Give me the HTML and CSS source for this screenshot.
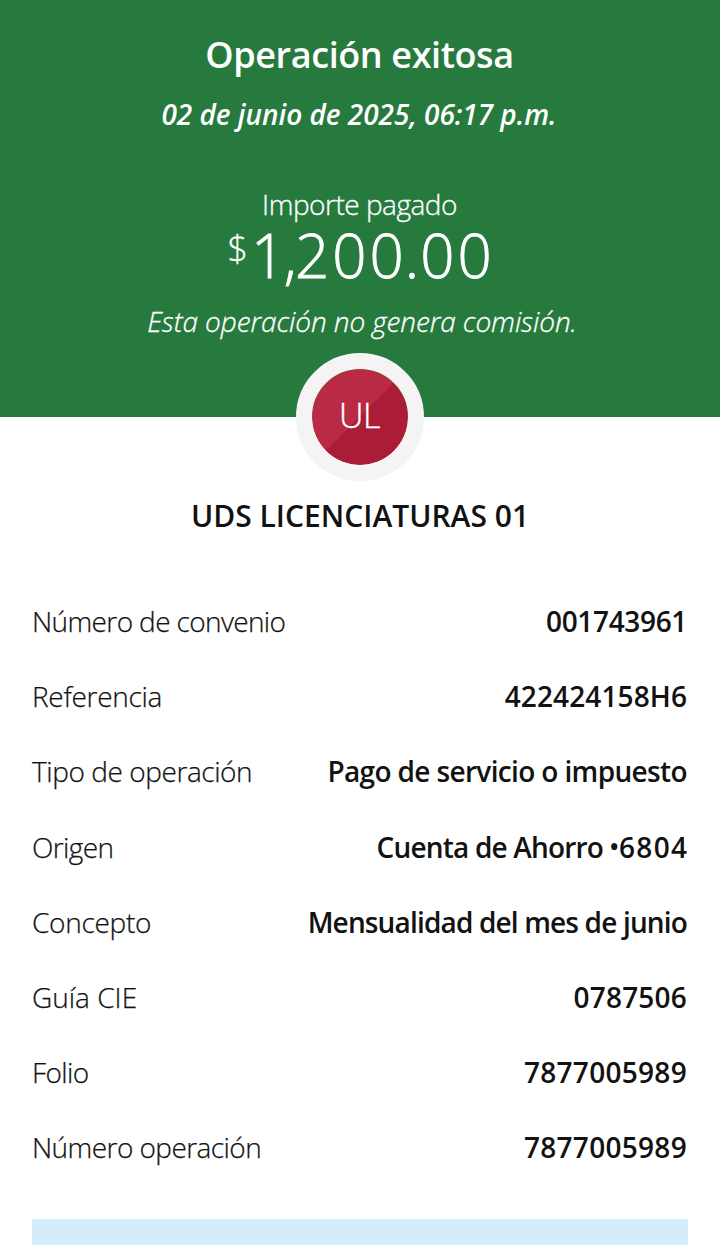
FILE: index.html
```html
<!DOCTYPE html>
<html lang="es">
<head>
<meta charset="utf-8">
<title>Operación exitosa</title>
<link rel="stylesheet" href="styles.css">
</head>
<body>
<main class="receipt">
  <header class="summary">
    <h1 class="title">Operación exitosa</h1>
    <p class="date">02 de junio de 2025, 06:17 p.m.</p>
    <p class="caption">Importe pagado</p>
    <p class="amount"><span class="currency">$</span><span class="figure"><span class="tight">1,</span><span class="wide">20</span>0.<span class="wide">0</span>0</span></p>
    <p class="fee">Esta operación no genera comisión.</p>
    <div class="avatar"><span>UL</span></div>
  </header>
  <h2 class="payee">UDS LICENCIATURAS 01</h2>
  <dl class="details">
    <div class="row"><dt class="l-convenio">Número de convenio</dt><dd class="v-convenio">001743961</dd></div>
    <div class="row"><dt class="l-referencia">Referencia</dt><dd class="v-referencia">422424158H6</dd></div>
    <div class="row"><dt class="l-tipo">Tipo de operación</dt><dd class="v-tipo">Pago de servicio o impuesto</dd></div>
    <div class="row"><dt class="l-origen">Origen</dt><dd class="v-origen">Cuenta de Ahorro <span class="dot">•</span><span class="digits">6804</span></dd></div>
    <div class="row"><dt class="l-concepto">Concepto</dt><dd class="v-concepto">Mensualidad del mes de junio</dd></div>
    <div class="row"><dt class="l-guia">Guía CIE</dt><dd class="v-guia">0787506</dd></div>
    <div class="row"><dt class="l-folio">Folio</dt><dd class="v-folio">7877005989</dd></div>
    <div class="row"><dt class="l-numero">Número operación</dt><dd class="v-folio">7877005989</dd></div>
  </dl>
  <div class="notice"></div>
</main>
</body>
</html>
```
FILE: styles.css
```css
* { box-sizing: border-box; margin: 0; padding: 0; }
body {
  height: 1245px;
  overflow: hidden;
  background: #fff;
  color: #121212;
  font-family: "Open Sans", "Noto Sans", sans-serif;
  white-space: nowrap;
}
.receipt { display: flex; flex-direction: column; height: 1245px; overflow: hidden; }
.summary {
  position: relative;
  flex: none;
  display: flex;
  flex-direction: column;
  align-items: center;
  height: 417px;
  padding-top: 31px;
  background: #277a3e;
  color: #fff;
}
.title { padding-right: 1px; font-size: 36px; font-weight: 600; line-height: 48px; letter-spacing: -0.4px; }
.date { margin-top: 16px; padding-right: 2px; font-size: 28px; font-weight: 600; font-style: italic; line-height: 38px; letter-spacing: -0.03px; }
.caption { margin-top: 52px; padding-right: 1px; font-size: 28px; font-weight: 300; line-height: 38px; letter-spacing: -0.5px; -webkit-text-stroke: 0.3px; }
.amount { display: flex; align-items: flex-start; height: 62px; font-weight: 300; }
.currency { margin: 8px 3px 0 0; font-size: 36px; line-height: 36px; -webkit-text-stroke: 0.3px; }
.figure { font-size: 60px; line-height: 64px; letter-spacing: 1px; -webkit-text-stroke: 0.8px; }
.tight { letter-spacing: -1.5px; }
.wide { letter-spacing: 3px; }
.fee { margin-top: 17px; padding-left: 4px; font-size: 28px; font-weight: 300; font-style: italic; line-height: 38px; letter-spacing: -0.1px; -webkit-text-stroke: 0.3px; }
/* Overlaps the boundary between the summary and the details */
.avatar {
  position: absolute;
  left: 296px;
  top: 353px;
  display: flex;
  align-items: center;
  justify-content: center;
  width: 128px;
  height: 128px;
  padding: 0 1px 4px 0;
  border: 16px solid #f4f4f4;
  border-radius: 50%;
  background: linear-gradient(135deg, #b92a45 50%, #ab1d37 50%);
  background-origin: padding-box;
  background-clip: padding-box;
  font-size: 34px;
  font-weight: 300;
  line-height: 40px;
  letter-spacing: -0.5px;
  -webkit-text-stroke: 0.4px;
}
.payee { flex: none; margin-top: 79px; text-align: center; font-size: 30px; font-weight: 600; line-height: 40px; letter-spacing: 0; }
.details { flex: none; margin-top: 48px; padding: 0 32px; font-size: 28px; line-height: 75.2px; }
.row { display: flex; justify-content: space-between; height: 75.2px; }
.row dt { font-weight: 300; -webkit-text-stroke: 0.25px; }
.row dd { margin-right: 1px; font-weight: 600; }
.l-convenio { letter-spacing: -0.62px; }
.l-referencia { letter-spacing: -0.3px; }
.l-tipo { letter-spacing: -0.43px; }
.l-origen { letter-spacing: -0.6px; }
.l-concepto { letter-spacing: -0.3px; }
.l-guia { letter-spacing: 0; }
.l-folio { letter-spacing: -0.6px; }
.l-numero { letter-spacing: -0.57px; }
.v-convenio { letter-spacing: -0.35px; }
.v-referencia { letter-spacing: 0.1px; }
.v-tipo { letter-spacing: -0.64px; }
.v-origen { letter-spacing: -0.82px; }
.dot { margin-right: 1px; font-size: 25px; vertical-align: 1.5px; line-height: 1; }
.digits { letter-spacing: 1.3px; margin-right: -1.3px; }
.v-concepto { letter-spacing: -0.84px; }
.v-guia { letter-spacing: 0.2px; }
.v-folio { letter-spacing: 0.3px; }
.notice { flex: 1; margin: 33px 32px 0; background: #d4edfc; }
```
